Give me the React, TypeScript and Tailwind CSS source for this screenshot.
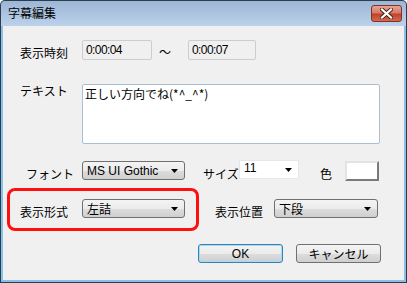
import type { ReactNode } from "react";

const jp = "font-['Noto_Sans_CJK_JP','Noto_Sans',sans-serif]";
const latin = "font-['Liberation_Sans','Noto_Sans_CJK_JP',sans-serif]";

function Arrow() {
  return (
    <svg width="7" height="4" viewBox="0 0 7 4" className="shrink-0">
      <path d="M0 0h7L3.5 4z" fill="#000" />
    </svg>
  );
}

function DropDown({ children, w, font = jp }: { children: ReactNode; w: string; font?: string }) {
  return (
    <div
      className={`${w} h-[19px] flex items-center justify-between pl-[4px] pr-[6px] border border-[#707070] rounded-[3px] bg-[linear-gradient(#f4f4f4_0%,#ebebeb_50%,#dddddd_51%,#cfcfcf_100%)] text-[12px] leading-none text-black ${font}`}
    >
      <span>{children}</span>
      <Arrow />
    </div>
  );
}

function Button({ children, focused = false, font = jp }: { children: ReactNode; focused?: boolean; font?: string }) {
  return (
    <div
      className={`w-[85px] h-[19px] flex items-center justify-center rounded-[3px] border text-[12px] leading-none text-black bg-[linear-gradient(#f4f4f4_0%,#ebebeb_50%,#dddddd_51%,#cfcfcf_100%)] ${font} ${
        focused ? "border-[#3c7fb1] shadow-[inset_0_0_0_1px_#9fdcf8]" : "border-[#707070]"
      }`}
    >
      {children}
    </div>
  );
}

export default function App() {
  return (
    <div className="w-[407px] h-[283px] flex flex-col bg-[#2b3c50] p-px rounded-t-[5px] overflow-hidden">
      {/* title bar */}
      <div className="h-[25px] shrink-0 flex justify-between bg-[linear-gradient(#9cb6d5,#bcd2eb)] rounded-t-[4px]">
        <span className={`pl-[7px] pt-[5px] text-[12px] leading-[14px] text-black ${jp}`}>字幕編集</span>
        <div className="mt-[4px] mr-[4px] w-[31px] h-[17px] flex items-center justify-center rounded-[3px] border border-[#7d3326] bg-[linear-gradient(#e8a493_0%,#d77a66_45%,#c0432c_55%,#d4694e_100%)]">
          <svg width="13" height="11" viewBox="0 0 13 11">
            <path d="M2 1.5l9 8M11 1.5l-9 8" stroke="#4a2019" strokeWidth="4" strokeLinecap="square" />
            <path d="M2 1.5l9 8M11 1.5l-9 8" stroke="#fff" strokeWidth="2.2" strokeLinecap="square" />
          </svg>
        </div>
      </div>

      {/* frame + body */}
      <div className="flex-1 flex flex-col border-x-2 border-b-2 border-[#86c1e6] bg-[#f0f0f0]">
        <div className="flex-1 flex flex-col bg-[#f0f0f0] text-[12px] leading-none text-black">
          {/* display time */}
          <div className="mt-[14px] h-[20px] flex items-center">
            <span className={`ml-[17px] w-[62px] mt-[6px] ${jp}`}>表示時刻</span>
            <div className={`w-[70px] h-[20px] border border-[#cdcdcd] rounded-[2px] bg-[#f0f0f0] pl-[3px] pt-[3px] tracking-[-0.6px] ${latin}`}>
              0:00:04
            </div>
            <span className={`w-[36px] pl-[7px] mt-[4px] ${jp}`}>～</span>
            <div className={`w-[68px] h-[20px] border border-[#cdcdcd] rounded-[2px] bg-[#f0f0f0] pl-[3px] pt-[3px] tracking-[-0.6px] ${latin}`}>
              0:00:07
            </div>
          </div>

          {/* text */}
          <div className="mt-[24px] flex">
            <span className={`ml-[17px] w-[62px] pt-[1px] ${jp}`}>テキスト</span>
            <div className={`w-[298px] h-[60px] border border-[#a9bfd4] rounded-[2px] bg-white pl-[2px] pt-[3px] ${jp}`}>
              正しい方向でね(*^_^*)
            </div>
          </div>

          {/* font / size / colour */}
          <div className="mt-[16px] h-[21px] flex items-start">
            <span className={`ml-[23px] w-[56px] mt-[8px] ${jp}`}>フォント</span>
            <div className="mt-[1px]">
              <DropDown w="w-[103px]" font={latin}>MS UI Gothic</DropDown>
            </div>
            <span className={`ml-[18px] w-[36px] mt-[8px] ${jp}`}>サイズ</span>
            <div className="w-[60px] h-[19px] flex items-center justify-between pl-[4px] pr-[6px] border border-[#e3e8ee] bg-white">
              <span className={`${latin} -mt-[4px]`}>11</span>
              <Arrow />
            </div>
            <span className={`ml-[21px] w-[25px] mt-[8px] ${jp}`}>色</span>
            <div className="mt-[1px] w-[34px] h-[20px] border-2 border-t-[#e3e3e3] border-l-[#e3e3e3] border-r-[#7a7a7a] border-b-[#7a7a7a] bg-white" />
          </div>

          {/* display style / position */}
          <div className="mt-[7px] h-[43px] flex items-start">
            <div className="ml-[4px] w-[192px] h-[43px] border-[3px] border-[#ff1010] rounded-[8px] flex items-start pl-[10px] pt-[8px]">
              <span className={`w-[62px] mt-[7px] ${jp}`}>表示形式</span>
              <DropDown w="w-[103px]">左詰</DropDown>
            </div>
            <span className={`ml-[16px] w-[59px] mt-[18px] ${jp}`}>表示位置</span>
            <div className="mt-[11px]">
              <DropDown w="w-[104px]">下段</DropDown>
            </div>
          </div>

          {/* buttons */}
          <div className="mt-[13px] flex justify-end gap-[13px] pr-[23px]">
            <Button focused font={latin}>OK</Button>
            <Button>キャンセル</Button>
          </div>
        </div>
      </div>
    </div>
  );
}
